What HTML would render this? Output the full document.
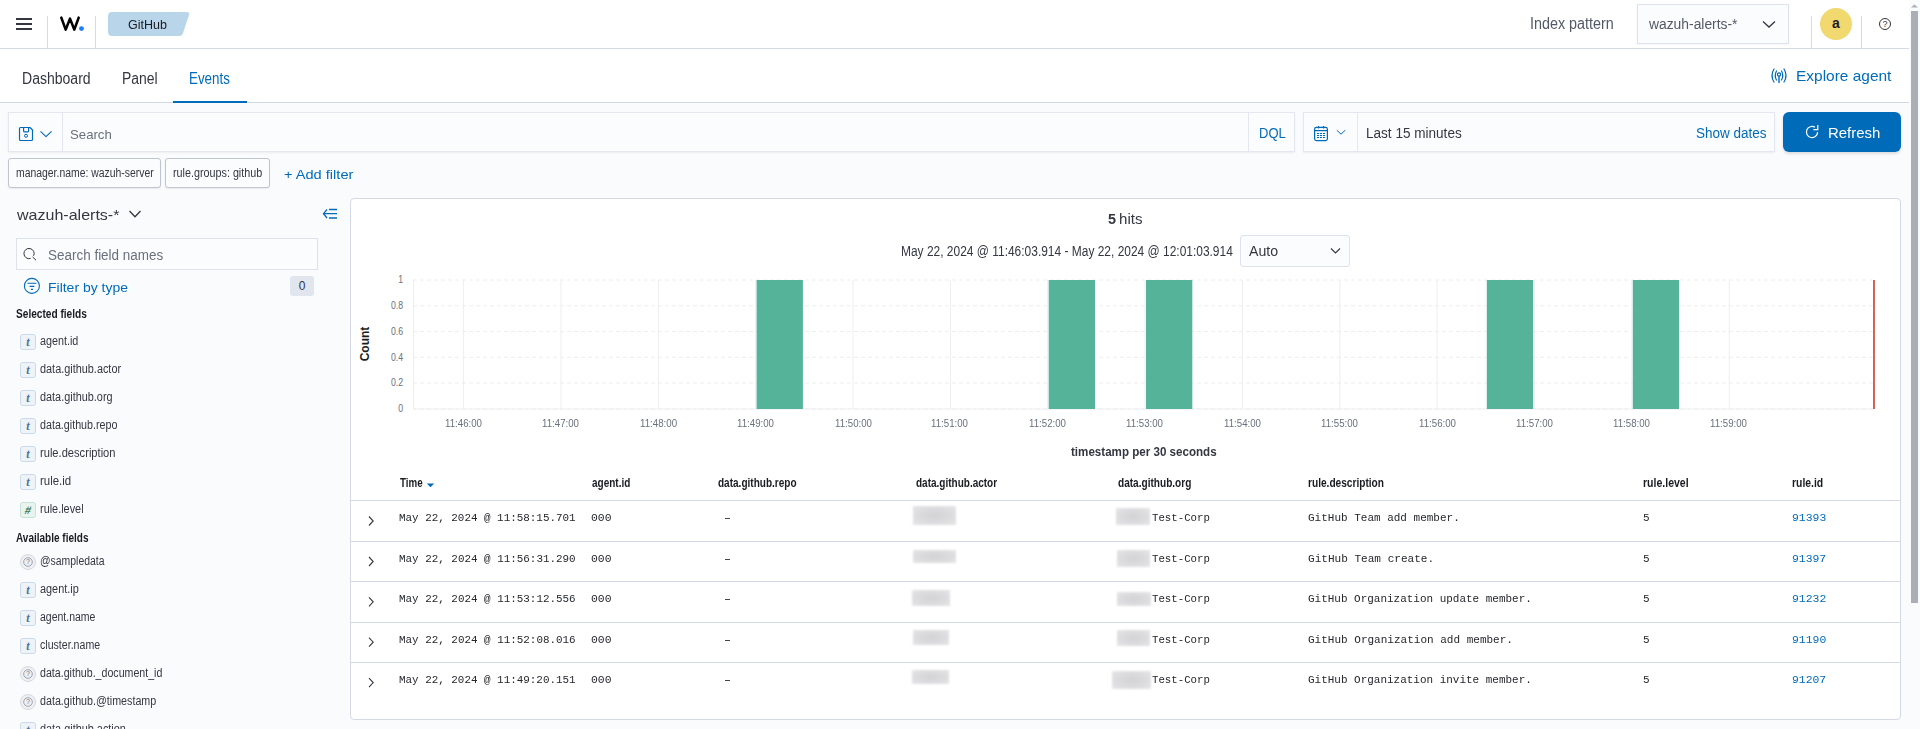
<!DOCTYPE html>
<html><head><meta charset="utf-8"><title>Wazuh - GitHub Events</title>
<style>
html,body{margin:0;padding:0;}
body{width:1920px;height:729px;overflow:hidden;background:#FAFBFD;font-family:'Liberation Sans', sans-serif;}
#root{position:relative;width:1920px;height:729px;overflow:hidden;background:#FAFBFD;}
.a{position:absolute;box-sizing:border-box;}
.t{position:absolute;white-space:nowrap;transform-origin:0 0;}
svg{position:absolute;overflow:visible;}
</style></head><body><div id="root">
<!-- header -->
<div class="a" style="left:0;top:0;width:1909px;height:49px;background:#fff;border-bottom:1px solid #D3DAE6;"></div>
<div class="a" style="left:16px;top:18px;width:16px;height:2px;background:#343741;"></div>
<div class="a" style="left:16px;top:23px;width:16px;height:2px;background:#343741;"></div>
<div class="a" style="left:16px;top:28px;width:16px;height:2px;background:#343741;"></div>
<div class="a" style="left:47px;top:16px;width:1px;height:32px;background:#D3DAE6;"></div>
<div class="a" style="left:95px;top:16px;width:1px;height:32px;background:#D3DAE6;"></div>
<svg style="left:0;top:0" width="100" height="48"><polyline points="61.3,17.6 65.7,29.6 70,18.6 74.3,29.6 78.7,17.6" fill="none" stroke="#000" stroke-width="2.6" stroke-linejoin="round" stroke-linecap="round"/><circle cx="81.5" cy="28.6" r="2.4" fill="#1B7BFF"/></svg>
<svg style="left:0;top:0" width="200" height="48"><path d="M112,12 L186,12 Q190,12 189,15 L183,33 Q182,36 179,36 L112,36 Q108,36 108,32 L108,16 Q108,12 112,12 Z" fill="#B9D5EA"/></svg>
<div class="a" style="left:1637px;top:4px;width:152px;height:40px;background:#FBFCFD;border:1px solid #DDE2EC;box-shadow:0 1px 2px rgba(0,0,0,0.04);"></div>
<svg style="left:0;top:0" width="1920" height="48"><polyline points="1763,21.5 1769,27 1775,21.5" fill="none" stroke="#343741" stroke-width="1.3"/></svg>
<div class="a" style="left:1811px;top:16px;width:1px;height:32px;background:#D3DAE6;"></div>
<div class="a" style="left:1861px;top:16px;width:1px;height:32px;background:#D3DAE6;"></div>
<div class="a" style="left:1820px;top:8px;width:32px;height:32px;border-radius:50%;background:#F1D86F;"></div>
<div class="a" style="left:1820px;top:8px;width:32px;height:32px;line-height:31px;text-align:center;font-size:14px;font-weight:700;color:#1a1c21;">a</div>
<div class="a" style="left:1879px;top:18px;width:12px;height:12px;border-radius:50%;border:1px solid #343741;"></div>
<div class="a" style="left:1879px;top:18px;width:12px;height:12px;line-height:12px;text-align:center;font-size:9px;color:#343741;">?</div>
<!-- tabs -->
<div class="a" style="left:0;top:49px;width:1909px;height:54px;background:#fff;border-bottom:1px solid #D3DAE6;"></div>
<div class="a" style="left:173px;top:101px;width:74px;height:2px;background:#006BB8;"></div>
<svg style="left:0;top:0" width="1920" height="100"><g fill="none" stroke="#006BB8" stroke-width="1.2" stroke-linecap="round"><path d="M1774,69 Q1770,75.5 1774,82"/><path d="M1776.5,71 Q1774,75.5 1776.5,80"/><path d="M1784,69 Q1788,75.5 1784,82"/><path d="M1781.5,71 Q1784,75.5 1781.5,80"/><circle cx="1779" cy="74.5" r="1.6"/><path d="M1779,76.5 L1779,82.5" stroke-width="1.4"/></g></svg>
<!-- query bar -->
<div class="a" style="left:8px;top:112px;width:1287px;height:40px;background:#FBFCFD;border:1px solid #E3E7EF;box-shadow:0 1px 2px rgba(0,0,0,0.06);"></div>
<div class="a" style="left:62px;top:113px;width:1px;height:38px;background:#E3E7EF;"></div>
<div class="a" style="left:1248px;top:113px;width:1px;height:38px;background:#E3E7EF;"></div>
<svg style="left:0;top:0" width="100" height="160"><g fill="none" stroke="#006BB8" stroke-width="1.2" stroke-linejoin="round"><path d="M20.5,127.5 L30,127.5 L32.5,130 L32.5,139.5 Q32.5,140.5 31.5,140.5 L20.5,140.5 Q19.5,140.5 19.5,139.5 L19.5,128.5 Q19.5,127.5 20.5,127.5 Z"/><path d="M23.6,127.5 L23.6,131 Q23.6,131.8 24.4,131.8 L27.8,131.8 Q28.6,131.8 28.6,131 L28.6,127.5"/><circle cx="26" cy="135.8" r="1.5" stroke-width="1"/><polyline points="40.5,131.3 46,136.6 51.5,131.3" stroke-width="1.1"/></g></svg>
<div class="a" style="left:1303px;top:112px;width:472px;height:40px;background:#FBFCFD;border:1px solid #E3E7EF;box-shadow:0 1px 2px rgba(0,0,0,0.06);"></div>
<div class="a" style="left:1357px;top:113px;width:1px;height:38px;background:#E3E7EF;"></div>
<svg style="left:0;top:0" width="1920" height="160"><g fill="none" stroke="#006BB8" stroke-width="1.2"><rect x="1314.6" y="127.4" width="12.8" height="13.2" rx="1.8"/><path d="M1314.6,130.6 L1327.4,130.6"/><path d="M1318.5,126 L1318.5,128.6 M1323.5,126 L1323.5,128.6"/></g><g fill="#006BB8"><rect x="1317" y="133" width="2" height="1"/><rect x="1320" y="133" width="2" height="1"/><rect x="1323" y="133" width="2" height="1"/><rect x="1317" y="135" width="2" height="1"/><rect x="1320" y="135" width="2" height="1"/><rect x="1323" y="135" width="2" height="1"/><rect x="1317" y="137" width="2" height="1"/><rect x="1320" y="137" width="2" height="1"/><rect x="1323" y="137" width="2" height="1"/></g><polyline points="1336.8,130.2 1341,134.2 1345.2,130.2" fill="none" stroke="#006BB8" stroke-width="1"/></svg>
<div class="a" style="left:1783px;top:112px;width:118px;height:40px;background:#006BB8;border-radius:6px;box-shadow:0 2px 3px rgba(0,0,0,0.12);"></div>
<svg style="left:0;top:0" width="1920" height="160"><g fill="none" stroke="#fff" stroke-width="1.2"><path d="M1815,127.3 A5.6,5.6 0 1 0 1817.6,132"/><polyline points="1817.8,125 1817.8,129.6 1813.4,129.6"/></g></svg>
<!-- filters -->
<div class="a" style="left:8px;top:158px;width:153px;height:30px;background:#FBFCFD;border:1px solid #BEC5D1;border-radius:3px;box-shadow:0 1px 2px rgba(0,0,0,0.07);"></div>
<div class="a" style="left:165px;top:158px;width:105px;height:30px;background:#FBFCFD;border:1px solid #BEC5D1;border-radius:3px;box-shadow:0 1px 2px rgba(0,0,0,0.07);"></div>
<!-- sidebar -->
<svg style="left:0;top:0" width="350" height="300"><polyline points="129.5,211 135,216.8 140.5,211" fill="none" stroke="#343741" stroke-width="1.3"/><g fill="none" stroke="#006BB8" stroke-width="1.3"><path d="M327,209.5 L323.5,213.7 L327,218"/><path d="M323.5,213.7 L337,213.7 M329,209.5 L337,209.5 M329,218 L337,218"/></g></svg>
<div class="a" style="left:16px;top:238px;width:302px;height:32px;background:#FBFCFD;border:1px solid #DDE2EC;"></div>
<svg style="left:0;top:0" width="350" height="300"><g fill="none" stroke="#343741" stroke-width="1"><path d="M33.6,255.8 A5.1,5.1 0 1 0 30.6,258.4"/><path d="M32.6,256.9 L36,260.2"/></g><g fill="none" stroke="#006BB8" stroke-width="1.1"><circle cx="31.9" cy="285.9" r="7.5"/><path d="M27.4,283.2 L36.4,283.2 M29.6,286.4 L34.4,286.4 M31,289.4 L33,289.4"/></g></svg>
<div class="a" style="left:290px;top:276px;width:24px;height:20px;background:#E0E5EE;border-radius:3px;"></div>
<div class="a" style="left:290px;top:276px;width:24px;height:20px;line-height:20px;text-align:center;font-size:12px;color:#343741;">0</div>

<div class="a" style="left:20px;top:334px;width:16px;height:16px;background:#EEF3F8;border:1px solid #C9DBEB;border-radius:3px;"></div>
<div class="a" style="left:20px;top:334px;width:16px;height:16px;line-height:16px;text-align:center;font-family:'Liberation Serif',serif;font-style:italic;font-weight:700;font-size:12px;color:#4C7298;">t</div>
<div class="a" style="left:20px;top:362px;width:16px;height:16px;background:#EEF3F8;border:1px solid #C9DBEB;border-radius:3px;"></div>
<div class="a" style="left:20px;top:362px;width:16px;height:16px;line-height:16px;text-align:center;font-family:'Liberation Serif',serif;font-style:italic;font-weight:700;font-size:12px;color:#4C7298;">t</div>
<div class="a" style="left:20px;top:390px;width:16px;height:16px;background:#EEF3F8;border:1px solid #C9DBEB;border-radius:3px;"></div>
<div class="a" style="left:20px;top:390px;width:16px;height:16px;line-height:16px;text-align:center;font-family:'Liberation Serif',serif;font-style:italic;font-weight:700;font-size:12px;color:#4C7298;">t</div>
<div class="a" style="left:20px;top:418px;width:16px;height:16px;background:#EEF3F8;border:1px solid #C9DBEB;border-radius:3px;"></div>
<div class="a" style="left:20px;top:418px;width:16px;height:16px;line-height:16px;text-align:center;font-family:'Liberation Serif',serif;font-style:italic;font-weight:700;font-size:12px;color:#4C7298;">t</div>
<div class="a" style="left:20px;top:446px;width:16px;height:16px;background:#EEF3F8;border:1px solid #C9DBEB;border-radius:3px;"></div>
<div class="a" style="left:20px;top:446px;width:16px;height:16px;line-height:16px;text-align:center;font-family:'Liberation Serif',serif;font-style:italic;font-weight:700;font-size:12px;color:#4C7298;">t</div>
<div class="a" style="left:20px;top:474px;width:16px;height:16px;background:#EEF3F8;border:1px solid #C9DBEB;border-radius:3px;"></div>
<div class="a" style="left:20px;top:474px;width:16px;height:16px;line-height:16px;text-align:center;font-family:'Liberation Serif',serif;font-style:italic;font-weight:700;font-size:12px;color:#4C7298;">t</div>
<div class="a" style="left:20px;top:502px;width:16px;height:16px;background:#E9F4EF;border:1px solid #C5E3D6;border-radius:3px;"></div>
<div class="a" style="left:20px;top:502px;width:16px;height:16px;line-height:16px;text-align:center;font-weight:700;font-size:11px;color:#3B7A62;transform:skewX(-14deg);">#</div>
<div class="a" style="left:20px;top:554px;width:16px;height:16px;background:#EEF0F3;border:1px solid #D5D9DF;border-radius:50%;"></div>
<svg style="left:0;top:0" width="40" height="729"><circle cx="28" cy="562" r="4.3" fill="none" stroke="#8A8F99" stroke-width="0.8"/><text x="28" y="564.3" font-size="6.5" text-anchor="middle" fill="#6A6F79" font-family="Liberation Sans">?</text></svg>
<div class="a" style="left:20px;top:582px;width:16px;height:16px;background:#EEF3F8;border:1px solid #C9DBEB;border-radius:3px;"></div>
<div class="a" style="left:20px;top:582px;width:16px;height:16px;line-height:16px;text-align:center;font-family:'Liberation Serif',serif;font-style:italic;font-weight:700;font-size:12px;color:#4C7298;">t</div>
<div class="a" style="left:20px;top:610px;width:16px;height:16px;background:#EEF3F8;border:1px solid #C9DBEB;border-radius:3px;"></div>
<div class="a" style="left:20px;top:610px;width:16px;height:16px;line-height:16px;text-align:center;font-family:'Liberation Serif',serif;font-style:italic;font-weight:700;font-size:12px;color:#4C7298;">t</div>
<div class="a" style="left:20px;top:638px;width:16px;height:16px;background:#EEF3F8;border:1px solid #C9DBEB;border-radius:3px;"></div>
<div class="a" style="left:20px;top:638px;width:16px;height:16px;line-height:16px;text-align:center;font-family:'Liberation Serif',serif;font-style:italic;font-weight:700;font-size:12px;color:#4C7298;">t</div>
<div class="a" style="left:20px;top:666px;width:16px;height:16px;background:#EEF0F3;border:1px solid #D5D9DF;border-radius:50%;"></div>
<svg style="left:0;top:0" width="40" height="729"><circle cx="28" cy="674" r="4.3" fill="none" stroke="#8A8F99" stroke-width="0.8"/><text x="28" y="676.3" font-size="6.5" text-anchor="middle" fill="#6A6F79" font-family="Liberation Sans">?</text></svg>
<div class="a" style="left:20px;top:694px;width:16px;height:16px;background:#EEF0F3;border:1px solid #D5D9DF;border-radius:50%;"></div>
<svg style="left:0;top:0" width="40" height="729"><circle cx="28" cy="702" r="4.3" fill="none" stroke="#8A8F99" stroke-width="0.8"/><text x="28" y="704.3" font-size="6.5" text-anchor="middle" fill="#6A6F79" font-family="Liberation Sans">?</text></svg>
<div class="a" style="left:20px;top:722px;width:16px;height:16px;background:#EEF3F8;border:1px solid #C9DBEB;border-radius:3px;"></div>
<div class="a" style="left:20px;top:722px;width:16px;height:16px;line-height:16px;text-align:center;font-family:'Liberation Serif',serif;font-style:italic;font-weight:700;font-size:12px;color:#4C7298;">t</div>
<div class="a" style="left:350px;top:198px;width:1551px;height:522px;background:#fff;border:1px solid #D3DAE6;border-radius:4px;"></div>
<div class="a" style="left:1240px;top:235px;width:110px;height:32px;background:#FBFCFD;border:1px solid #DDE2EC;border-radius:3px;"></div>
<svg style="left:0;top:0" width="1920" height="300"><polyline points="1331,248.5 1335.5,253 1340,248.5" fill="none" stroke="#343741" stroke-width="1.1"/></svg>
<svg style="left:0;top:0" width="1920" height="729">
<line x1="413" y1="280.0" x2="1875" y2="280.0" stroke="#EDEEF1" stroke-width="1" stroke-dasharray="4,3"/>
<line x1="413" y1="305.8" x2="1875" y2="305.8" stroke="#EDEEF1" stroke-width="1" stroke-dasharray="4,3"/>
<line x1="413" y1="331.5" x2="1875" y2="331.5" stroke="#EDEEF1" stroke-width="1" stroke-dasharray="4,3"/>
<line x1="413" y1="357.3" x2="1875" y2="357.3" stroke="#EDEEF1" stroke-width="1" stroke-dasharray="4,3"/>
<line x1="413" y1="383.0" x2="1875" y2="383.0" stroke="#EDEEF1" stroke-width="1" stroke-dasharray="4,3"/>
<line x1="413" y1="408.8" x2="1875" y2="408.8" stroke="#EDEEF1" stroke-width="1" stroke-dasharray="4,3"/>
<line x1="463.6" y1="280" x2="463.6" y2="409" stroke="#EDEEF1" stroke-width="1"/>
<line x1="561.0" y1="280" x2="561.0" y2="409" stroke="#EDEEF1" stroke-width="1"/>
<line x1="658.3" y1="280" x2="658.3" y2="409" stroke="#EDEEF1" stroke-width="1"/>
<line x1="755.6" y1="280" x2="755.6" y2="409" stroke="#EDEEF1" stroke-width="1"/>
<line x1="853.0" y1="280" x2="853.0" y2="409" stroke="#EDEEF1" stroke-width="1"/>
<line x1="950.4" y1="280" x2="950.4" y2="409" stroke="#EDEEF1" stroke-width="1"/>
<line x1="1047.7" y1="280" x2="1047.7" y2="409" stroke="#EDEEF1" stroke-width="1"/>
<line x1="1145.0" y1="280" x2="1145.0" y2="409" stroke="#EDEEF1" stroke-width="1"/>
<line x1="1242.4" y1="280" x2="1242.4" y2="409" stroke="#EDEEF1" stroke-width="1"/>
<line x1="1339.8" y1="280" x2="1339.8" y2="409" stroke="#EDEEF1" stroke-width="1"/>
<line x1="1437.1" y1="280" x2="1437.1" y2="409" stroke="#EDEEF1" stroke-width="1"/>
<line x1="1534.4" y1="280" x2="1534.4" y2="409" stroke="#EDEEF1" stroke-width="1"/>
<line x1="1631.8" y1="280" x2="1631.8" y2="409" stroke="#EDEEF1" stroke-width="1"/>
<line x1="1729.2" y1="280" x2="1729.2" y2="409" stroke="#EDEEF1" stroke-width="1"/>
<line x1="413.5" y1="280" x2="413.5" y2="409" stroke="#EDEEF1" stroke-width="1"/>
<line x1="413" y1="409" x2="1875" y2="409" stroke="#EDEEF1" stroke-width="1"/>
<rect x="756.6" y="280" width="46.3" height="129" fill="#54B399"/>
<rect x="1048.7" y="280" width="46.3" height="129" fill="#54B399"/>
<rect x="1146.0" y="280" width="46.3" height="129" fill="#54B399"/>
<rect x="1486.8" y="280" width="46.3" height="129" fill="#54B399"/>
<rect x="1632.8" y="280" width="46.3" height="129" fill="#54B399"/>
<rect x="1873" y="280" width="2" height="129" fill="#D6625C"/>
<text transform="translate(403,283.4) scale(0.87,1)" font-size="10" text-anchor="end" fill="#69707D" font-family="Liberation Sans">1</text>
<text transform="translate(403,309.2) scale(0.87,1)" font-size="10" text-anchor="end" fill="#69707D" font-family="Liberation Sans">0.8</text>
<text transform="translate(403,334.9) scale(0.87,1)" font-size="10" text-anchor="end" fill="#69707D" font-family="Liberation Sans">0.6</text>
<text transform="translate(403,360.7) scale(0.87,1)" font-size="10" text-anchor="end" fill="#69707D" font-family="Liberation Sans">0.4</text>
<text transform="translate(403,386.4) scale(0.87,1)" font-size="10" text-anchor="end" fill="#69707D" font-family="Liberation Sans">0.2</text>
<text transform="translate(403,412.2) scale(0.87,1)" font-size="10" text-anchor="end" fill="#69707D" font-family="Liberation Sans">0</text>
<text transform="translate(368.5,344) rotate(-90)" font-size="12" font-weight="700" text-anchor="middle" fill="#1a1c21" font-family="Liberation Sans">Count</text>
<polygon points="426.8,483.5 434.2,483.5 430.5,487.3" fill="#006BB8"/>
<polyline points="369,516.5 373.2,521.0 369,525.5" fill="none" stroke="#343741" stroke-width="1.1"/>
<polyline points="369,557.0 373.2,561.5 369,566.0" fill="none" stroke="#343741" stroke-width="1.1"/>
<polyline points="369,597.3 373.2,601.8 369,606.3" fill="none" stroke="#343741" stroke-width="1.1"/>
<polyline points="369,637.7 373.2,642.2 369,646.7" fill="none" stroke="#343741" stroke-width="1.1"/>
<polyline points="369,678.1 373.2,682.6 369,687.1" fill="none" stroke="#343741" stroke-width="1.1"/>
</svg>
<div class="a" style="left:351px;top:500px;width:1549px;height:1px;background:#D3DAE6;"></div>
<div class="a" style="left:351px;top:541px;width:1549px;height:1px;background:#D3DAE6;"></div>
<div class="a" style="left:351px;top:581px;width:1549px;height:1px;background:#D3DAE6;"></div>
<div class="a" style="left:351px;top:622px;width:1549px;height:1px;background:#D3DAE6;"></div>
<div class="a" style="left:351px;top:662px;width:1549px;height:1px;background:#D3DAE6;"></div>
<div class="a" style="left:913px;top:506px;width:43px;height:19px;background:radial-gradient(ellipse at center,#D3D3D5 0%,#DCDCDE 55%,#E6E6E8 100%);filter:blur(1px);"></div>
<div class="a" style="left:913px;top:550px;width:43px;height:13px;background:radial-gradient(ellipse at center,#D3D3D5 0%,#DCDCDE 55%,#E6E6E8 100%);filter:blur(1px);"></div>
<div class="a" style="left:912px;top:590px;width:38px;height:16px;background:radial-gradient(ellipse at center,#D3D3D5 0%,#DCDCDE 55%,#E6E6E8 100%);filter:blur(1px);"></div>
<div class="a" style="left:913px;top:630px;width:36px;height:15px;background:radial-gradient(ellipse at center,#D3D3D5 0%,#DCDCDE 55%,#E6E6E8 100%);filter:blur(1px);"></div>
<div class="a" style="left:912px;top:670px;width:37px;height:14px;background:radial-gradient(ellipse at center,#D3D3D5 0%,#DCDCDE 55%,#E6E6E8 100%);filter:blur(1px);"></div>
<div class="a" style="left:1116px;top:508px;width:34px;height:17px;background:radial-gradient(ellipse at center,#D3D3D5 0%,#DCDCDE 55%,#E6E6E8 100%);filter:blur(1px);"></div>
<div class="a" style="left:1117px;top:550px;width:33px;height:17px;background:radial-gradient(ellipse at center,#D3D3D5 0%,#DCDCDE 55%,#E6E6E8 100%);filter:blur(1px);"></div>
<div class="a" style="left:1117px;top:592px;width:34px;height:14px;background:radial-gradient(ellipse at center,#D3D3D5 0%,#DCDCDE 55%,#E6E6E8 100%);filter:blur(1px);"></div>
<div class="a" style="left:1117px;top:630px;width:33px;height:16px;background:radial-gradient(ellipse at center,#D3D3D5 0%,#DCDCDE 55%,#E6E6E8 100%);filter:blur(1px);"></div>
<div class="a" style="left:1112px;top:671px;width:39px;height:18px;background:radial-gradient(ellipse at center,#D3D3D5 0%,#DCDCDE 55%,#E6E6E8 100%);filter:blur(1px);"></div>
<div class="a" style="left:1911px;top:11px;width:7px;height:592px;background:#A9AEB7;"></div>
<svg style="left:0;top:0" width="1920" height="20"><polygon points="1911,7.5 1918,7.5 1914.5,4.5" fill="#A9AEB7"/></svg>

<span class="t" id="t0" style="left:127.57px;top:17.70px;font-size:13px;line-height:13px;color:#1a1c21;font-family:'Liberation Sans', sans-serif;transform:scaleX(0.9625);">GitHub</span>
<span class="t" id="t1" style="left:1530.10px;top:16.26px;font-size:16px;line-height:16px;color:#535966;font-family:'Liberation Sans', sans-serif;transform:scaleX(0.8971);">Index pattern</span>
<span class="t" id="t2" style="left:1649.00px;top:17.05px;font-size:14px;line-height:14px;color:#535966;font-family:'Liberation Sans', sans-serif;transform:scaleX(0.9888);">wazuh-alerts-*</span>
<span class="t" id="t3" style="left:21.66px;top:70.56px;font-size:16px;line-height:16px;color:#343741;font-family:'Liberation Sans', sans-serif;transform:scaleX(0.8766);">Dashboard</span>
<span class="t" id="t4" style="left:121.64px;top:70.56px;font-size:16px;line-height:16px;color:#343741;font-family:'Liberation Sans', sans-serif;transform:scaleX(0.8718);">Panel</span>
<span class="t" id="t5" style="left:189.10px;top:70.56px;font-size:16px;line-height:16px;color:#006BB8;font-family:'Liberation Sans', sans-serif;transform:scaleX(0.8344);">Events</span>
<span class="t" id="t6" style="left:1795.57px;top:68.10px;font-size:15px;line-height:15px;color:#006BB8;font-family:'Liberation Sans', sans-serif;transform:scaleX(1.0305);">Explore agent</span>
<span class="t" id="t7" style="left:69.58px;top:127.80px;font-size:13px;line-height:13px;color:#69707D;font-family:'Liberation Sans', sans-serif;transform:scaleX(1.0145);">Search</span>
<span class="t" id="t8" style="left:1259.10px;top:126.25px;font-size:14px;line-height:14px;color:#006BB8;font-family:'Liberation Sans', sans-serif;transform:scaleX(0.9286);">DQL</span>
<span class="t" id="t9" style="left:1365.65px;top:125.55px;font-size:14px;line-height:14px;color:#343741;font-family:'Liberation Sans', sans-serif;transform:scaleX(0.9682);">Last 15 minutes</span>
<span class="t" id="t10" style="left:1695.58px;top:125.55px;font-size:14px;line-height:14px;color:#006BB8;font-family:'Liberation Sans', sans-serif;transform:scaleX(0.9641);">Show dates</span>
<span class="t" id="t11" style="left:1828.10px;top:125.30px;font-size:15px;line-height:15px;color:#FFFFFF;font-family:'Liberation Sans', sans-serif;font-weight:500;transform:scaleX(0.9957);">Refresh</span>
<span class="t" id="t12" style="left:15.66px;top:166.84px;font-size:12px;line-height:12px;color:#343741;font-family:'Liberation Sans', sans-serif;transform:scaleX(0.8675);">manager.name: wazuh-server</span>
<span class="t" id="t13" style="left:172.66px;top:166.84px;font-size:12px;line-height:12px;color:#343741;font-family:'Liberation Sans', sans-serif;transform:scaleX(0.8977);">rule.groups: github</span>
<span class="t" id="t14" style="left:283.64px;top:167.90px;font-size:13px;line-height:13px;color:#006BB8;font-family:'Liberation Sans', sans-serif;transform:scaleX(1.1224);">+ Add filter</span>
<span class="t" id="t15" style="left:17.47px;top:206.70px;font-size:15px;line-height:15px;color:#343741;font-family:'Liberation Sans', sans-serif;transform:scaleX(1.0686);">wazuh-alerts-*</span>
<span class="t" id="t16" style="left:47.58px;top:247.95px;font-size:14px;line-height:14px;color:#69707D;font-family:'Liberation Sans', sans-serif;transform:scaleX(0.9614);">Search field names</span>
<span class="t" id="t17" style="left:47.65px;top:280.80px;font-size:13px;line-height:13px;color:#006BB8;font-family:'Liberation Sans', sans-serif;transform:scaleX(1.0742);">Filter by type</span>
<span class="t" id="t18" style="left:15.57px;top:307.84px;font-size:12px;line-height:12px;color:#1a1c21;font-family:'Liberation Sans', sans-serif;font-weight:700;transform:scaleX(0.8434);">Selected fields</span>
<span class="t" id="t19" style="left:40.46px;top:334.84px;font-size:12px;line-height:12px;color:#343741;font-family:'Liberation Sans', sans-serif;transform:scaleX(0.8982);">agent.id</span>
<span class="t" id="t20" style="left:40.46px;top:362.84px;font-size:12px;line-height:12px;color:#343741;font-family:'Liberation Sans', sans-serif;transform:scaleX(0.9069);">data.github.actor</span>
<span class="t" id="t21" style="left:40.46px;top:390.84px;font-size:12px;line-height:12px;color:#343741;font-family:'Liberation Sans', sans-serif;transform:scaleX(0.9065);">data.github.org</span>
<span class="t" id="t22" style="left:40.46px;top:418.84px;font-size:12px;line-height:12px;color:#343741;font-family:'Liberation Sans', sans-serif;transform:scaleX(0.8933);">data.github.repo</span>
<span class="t" id="t23" style="left:39.66px;top:446.84px;font-size:12px;line-height:12px;color:#343741;font-family:'Liberation Sans', sans-serif;transform:scaleX(0.9279);">rule.description</span>
<span class="t" id="t24" style="left:39.66px;top:474.84px;font-size:12px;line-height:12px;color:#343741;font-family:'Liberation Sans', sans-serif;transform:scaleX(0.9529);">rule.id</span>
<span class="t" id="t25" style="left:39.66px;top:502.84px;font-size:12px;line-height:12px;color:#343741;font-family:'Liberation Sans', sans-serif;transform:scaleX(0.9073);">rule.level</span>
<span class="t" id="t26" style="left:16.46px;top:531.64px;font-size:12px;line-height:12px;color:#1a1c21;font-family:'Liberation Sans', sans-serif;font-weight:700;transform:scaleX(0.8339);">Available fields</span>
<span class="t" id="t27" style="left:39.66px;top:555.24px;font-size:12px;line-height:12px;color:#343741;font-family:'Liberation Sans', sans-serif;transform:scaleX(0.8691);">@sampledata</span>
<span class="t" id="t28" style="left:40.46px;top:583.24px;font-size:12px;line-height:12px;color:#343741;font-family:'Liberation Sans', sans-serif;transform:scaleX(0.9082);">agent.ip</span>
<span class="t" id="t29" style="left:40.46px;top:611.24px;font-size:12px;line-height:12px;color:#343741;font-family:'Liberation Sans', sans-serif;transform:scaleX(0.8750);">agent.name</span>
<span class="t" id="t30" style="left:40.46px;top:639.24px;font-size:12px;line-height:12px;color:#343741;font-family:'Liberation Sans', sans-serif;transform:scaleX(0.8841);">cluster.name</span>
<span class="t" id="t31" style="left:40.46px;top:667.24px;font-size:12px;line-height:12px;color:#343741;font-family:'Liberation Sans', sans-serif;transform:scaleX(0.8862);">data.github._document_id</span>
<span class="t" id="t32" style="left:40.46px;top:695.24px;font-size:12px;line-height:12px;color:#343741;font-family:'Liberation Sans', sans-serif;transform:scaleX(0.8924);">data.github.@timestamp</span>
<span class="t" id="t33" style="left:40.46px;top:723.24px;font-size:12px;line-height:12px;color:#343741;font-family:'Liberation Sans', sans-serif;transform:scaleX(0.9066);">data.github.action</span>
<span class="t" id="t34" style="left:1119.41px;top:211.00px;font-size:15px;line-height:15px;color:#343741;font-family:'Liberation Sans', sans-serif;transform:scaleX(1.0053);">hits</span>
<span class="t" id="t35" style="left:1107.64px;top:211.00px;font-size:15px;line-height:15px;color:#343741;font-family:'Liberation Sans', sans-serif;font-weight:700;transform:scaleX(0.9571);">5</span>
<span class="t" id="t36" style="left:900.65px;top:244.45px;font-size:14px;line-height:14px;color:#343741;font-family:'Liberation Sans', sans-serif;transform:scaleX(0.8540);">May 22, 2024 @ 11:46:03.914 - May 22, 2024 @ 12:01:03.914</span>
<span class="t" id="t37" style="left:1248.54px;top:243.65px;font-size:14px;line-height:14px;color:#343741;font-family:'Liberation Sans', sans-serif;transform:scaleX(1.0108);">Auto</span>
<span class="t" id="t38" style="left:444.61px;top:418.54px;font-size:10px;line-height:10px;color:#69707D;font-family:'Liberation Sans', sans-serif;transform:scaleX(0.9691);">11:46:00</span>
<span class="t" id="t39" style="left:542.38px;top:418.54px;font-size:10px;line-height:10px;color:#69707D;font-family:'Liberation Sans', sans-serif;transform:scaleX(0.9691);">11:47:00</span>
<span class="t" id="t40" style="left:639.64px;top:418.54px;font-size:10px;line-height:10px;color:#69707D;font-family:'Liberation Sans', sans-serif;transform:scaleX(0.9713);">11:48:00</span>
<span class="t" id="t41" style="left:736.90px;top:418.54px;font-size:10px;line-height:10px;color:#69707D;font-family:'Liberation Sans', sans-serif;transform:scaleX(0.9691);">11:49:00</span>
<span class="t" id="t42" style="left:834.57px;top:418.54px;font-size:10px;line-height:10px;color:#69707D;font-family:'Liberation Sans', sans-serif;transform:scaleX(0.9691);">11:50:00</span>
<span class="t" id="t43" style="left:931.33px;top:418.54px;font-size:10px;line-height:10px;color:#69707D;font-family:'Liberation Sans', sans-serif;transform:scaleX(0.9691);">11:51:00</span>
<span class="t" id="t44" style="left:1029.10px;top:418.54px;font-size:10px;line-height:10px;color:#69707D;font-family:'Liberation Sans', sans-serif;transform:scaleX(0.9691);">11:52:00</span>
<span class="t" id="t45" style="left:1126.36px;top:418.54px;font-size:10px;line-height:10px;color:#69707D;font-family:'Liberation Sans', sans-serif;transform:scaleX(0.9691);">11:53:00</span>
<span class="t" id="t46" style="left:1223.63px;top:418.54px;font-size:10px;line-height:10px;color:#69707D;font-family:'Liberation Sans', sans-serif;transform:scaleX(0.9691);">11:54:00</span>
<span class="t" id="t47" style="left:1320.89px;top:418.54px;font-size:10px;line-height:10px;color:#69707D;font-family:'Liberation Sans', sans-serif;transform:scaleX(0.9691);">11:55:00</span>
<span class="t" id="t48" style="left:1418.66px;top:418.54px;font-size:10px;line-height:10px;color:#69707D;font-family:'Liberation Sans', sans-serif;transform:scaleX(0.9691);">11:56:00</span>
<span class="t" id="t49" style="left:1515.82px;top:418.54px;font-size:10px;line-height:10px;color:#69707D;font-family:'Liberation Sans', sans-serif;transform:scaleX(0.9691);">11:57:00</span>
<span class="t" id="t50" style="left:1613.09px;top:418.54px;font-size:10px;line-height:10px;color:#69707D;font-family:'Liberation Sans', sans-serif;transform:scaleX(0.9691);">11:58:00</span>
<span class="t" id="t51" style="left:1710.36px;top:418.54px;font-size:10px;line-height:10px;color:#69707D;font-family:'Liberation Sans', sans-serif;transform:scaleX(0.9691);">11:59:00</span>
<span class="t" id="t52" style="left:1070.54px;top:445.84px;font-size:12px;line-height:12px;color:#343741;font-family:'Liberation Sans', sans-serif;font-weight:700;transform:scaleX(0.9661);">timestamp per 30 seconds</span>
<span class="t" id="t53" style="left:399.51px;top:476.84px;font-size:12px;line-height:12px;color:#1a1c21;font-family:'Liberation Sans', sans-serif;font-weight:700;transform:scaleX(0.8140);">Time</span>
<span class="t" id="t54" style="left:591.54px;top:476.84px;font-size:12px;line-height:12px;color:#1a1c21;font-family:'Liberation Sans', sans-serif;font-weight:700;transform:scaleX(0.8322);">agent.id</span>
<span class="t" id="t55" style="left:717.52px;top:476.84px;font-size:12px;line-height:12px;color:#1a1c21;font-family:'Liberation Sans', sans-serif;font-weight:700;transform:scaleX(0.8354);">data.github.repo</span>
<span class="t" id="t56" style="left:916.47px;top:476.84px;font-size:12px;line-height:12px;color:#1a1c21;font-family:'Liberation Sans', sans-serif;font-weight:700;transform:scaleX(0.8333);">data.github.actor</span>
<span class="t" id="t57" style="left:1118.46px;top:476.84px;font-size:12px;line-height:12px;color:#1a1c21;font-family:'Liberation Sans', sans-serif;font-weight:700;transform:scaleX(0.8398);">data.github.org</span>
<span class="t" id="t58" style="left:1308.10px;top:476.84px;font-size:12px;line-height:12px;color:#1a1c21;font-family:'Liberation Sans', sans-serif;font-weight:700;transform:scaleX(0.8441);">rule.description</span>
<span class="t" id="t59" style="left:1642.65px;top:476.84px;font-size:12px;line-height:12px;color:#1a1c21;font-family:'Liberation Sans', sans-serif;font-weight:700;transform:scaleX(0.8772);">rule.level</span>
<span class="t" id="t60" style="left:1792.10px;top:476.84px;font-size:12px;line-height:12px;color:#1a1c21;font-family:'Liberation Sans', sans-serif;font-weight:700;transform:scaleX(0.8664);">rule.id</span>
<span class="t" id="t61" style="left:398.65px;top:512.19px;font-size:11.5px;line-height:11.5px;color:#25272d;font-family:'Liberation Mono', monospace;transform:scaleX(0.9479);">May 22, 2024 @ 11:58:15.701</span>
<span class="t" id="t62" style="left:590.50px;top:512.19px;font-size:11.5px;line-height:11.5px;color:#25272d;font-family:'Liberation Mono', monospace;transform:scaleX(0.9923);">000</span>
<span class="t" id="t63" style="left:722.35px;top:512.19px;font-size:11.5px;line-height:11.5px;color:#25272d;font-family:'Liberation Mono', monospace;transform:scaleX(1.5961);">-</span>
<span class="t" id="t64" style="left:1151.55px;top:512.19px;font-size:11.5px;line-height:11.5px;color:#25272d;font-family:'Liberation Mono', monospace;transform:scaleX(0.9315);">Test-Corp</span>
<span class="t" id="t65" style="left:1308.10px;top:512.19px;font-size:11.5px;line-height:11.5px;color:#25272d;font-family:'Liberation Mono', monospace;transform:scaleX(0.9561);">GitHub Team add member.</span>
<span class="t" id="t66" style="left:1642.65px;top:512.19px;font-size:11.5px;line-height:11.5px;color:#25272d;font-family:'Liberation Mono', monospace;transform:scaleX(0.9555);">5</span>
<span class="t" id="t67" style="left:1792.10px;top:512.19px;font-size:11.5px;line-height:11.5px;color:#006BB8;font-family:'Liberation Mono', monospace;transform:scaleX(0.9926);">91393</span>
<span class="t" id="t68" style="left:398.65px;top:552.69px;font-size:11.5px;line-height:11.5px;color:#25272d;font-family:'Liberation Mono', monospace;transform:scaleX(0.9480);">May 22, 2024 @ 11:56:31.290</span>
<span class="t" id="t69" style="left:590.50px;top:552.69px;font-size:11.5px;line-height:11.5px;color:#25272d;font-family:'Liberation Mono', monospace;transform:scaleX(0.9923);">000</span>
<span class="t" id="t70" style="left:722.35px;top:552.69px;font-size:11.5px;line-height:11.5px;color:#25272d;font-family:'Liberation Mono', monospace;transform:scaleX(1.5961);">-</span>
<span class="t" id="t71" style="left:1151.55px;top:552.69px;font-size:11.5px;line-height:11.5px;color:#25272d;font-family:'Liberation Mono', monospace;transform:scaleX(0.9315);">Test-Corp</span>
<span class="t" id="t72" style="left:1308.10px;top:552.69px;font-size:11.5px;line-height:11.5px;color:#25272d;font-family:'Liberation Mono', monospace;transform:scaleX(0.9617);">GitHub Team create.</span>
<span class="t" id="t73" style="left:1642.65px;top:552.69px;font-size:11.5px;line-height:11.5px;color:#25272d;font-family:'Liberation Mono', monospace;transform:scaleX(0.9555);">5</span>
<span class="t" id="t74" style="left:1792.10px;top:552.69px;font-size:11.5px;line-height:11.5px;color:#006BB8;font-family:'Liberation Mono', monospace;transform:scaleX(0.9899);">91397</span>
<span class="t" id="t75" style="left:398.65px;top:592.89px;font-size:11.5px;line-height:11.5px;color:#25272d;font-family:'Liberation Mono', monospace;transform:scaleX(0.9480);">May 22, 2024 @ 11:53:12.556</span>
<span class="t" id="t76" style="left:590.50px;top:592.89px;font-size:11.5px;line-height:11.5px;color:#25272d;font-family:'Liberation Mono', monospace;transform:scaleX(0.9923);">000</span>
<span class="t" id="t77" style="left:722.35px;top:592.89px;font-size:11.5px;line-height:11.5px;color:#25272d;font-family:'Liberation Mono', monospace;transform:scaleX(1.5961);">-</span>
<span class="t" id="t78" style="left:1151.55px;top:592.89px;font-size:11.5px;line-height:11.5px;color:#25272d;font-family:'Liberation Mono', monospace;transform:scaleX(0.9315);">Test-Corp</span>
<span class="t" id="t79" style="left:1308.10px;top:592.89px;font-size:11.5px;line-height:11.5px;color:#25272d;font-family:'Liberation Mono', monospace;transform:scaleX(0.9540);">GitHub Organization update member.</span>
<span class="t" id="t80" style="left:1642.65px;top:592.89px;font-size:11.5px;line-height:11.5px;color:#25272d;font-family:'Liberation Mono', monospace;transform:scaleX(0.9555);">5</span>
<span class="t" id="t81" style="left:1792.10px;top:592.89px;font-size:11.5px;line-height:11.5px;color:#006BB8;font-family:'Liberation Mono', monospace;transform:scaleX(0.9926);">91232</span>
<span class="t" id="t82" style="left:398.65px;top:634.29px;font-size:11.5px;line-height:11.5px;color:#25272d;font-family:'Liberation Mono', monospace;transform:scaleX(0.9480);">May 22, 2024 @ 11:52:08.016</span>
<span class="t" id="t83" style="left:590.50px;top:634.29px;font-size:11.5px;line-height:11.5px;color:#25272d;font-family:'Liberation Mono', monospace;transform:scaleX(0.9923);">000</span>
<span class="t" id="t84" style="left:722.35px;top:634.29px;font-size:11.5px;line-height:11.5px;color:#25272d;font-family:'Liberation Mono', monospace;transform:scaleX(1.5961);">-</span>
<span class="t" id="t85" style="left:1151.55px;top:634.29px;font-size:11.5px;line-height:11.5px;color:#25272d;font-family:'Liberation Mono', monospace;transform:scaleX(0.9315);">Test-Corp</span>
<span class="t" id="t86" style="left:1308.10px;top:634.29px;font-size:11.5px;line-height:11.5px;color:#25272d;font-family:'Liberation Mono', monospace;transform:scaleX(0.9579);">GitHub Organization add member.</span>
<span class="t" id="t87" style="left:1642.65px;top:634.29px;font-size:11.5px;line-height:11.5px;color:#25272d;font-family:'Liberation Mono', monospace;transform:scaleX(0.9555);">5</span>
<span class="t" id="t88" style="left:1792.10px;top:634.29px;font-size:11.5px;line-height:11.5px;color:#006BB8;font-family:'Liberation Mono', monospace;transform:scaleX(0.9926);">91190</span>
<span class="t" id="t89" style="left:398.65px;top:673.99px;font-size:11.5px;line-height:11.5px;color:#25272d;font-family:'Liberation Mono', monospace;transform:scaleX(0.9479);">May 22, 2024 @ 11:49:20.151</span>
<span class="t" id="t90" style="left:590.50px;top:673.99px;font-size:11.5px;line-height:11.5px;color:#25272d;font-family:'Liberation Mono', monospace;transform:scaleX(0.9923);">000</span>
<span class="t" id="t91" style="left:722.35px;top:673.99px;font-size:11.5px;line-height:11.5px;color:#25272d;font-family:'Liberation Mono', monospace;transform:scaleX(1.5961);">-</span>
<span class="t" id="t92" style="left:1151.55px;top:673.99px;font-size:11.5px;line-height:11.5px;color:#25272d;font-family:'Liberation Mono', monospace;transform:scaleX(0.9315);">Test-Corp</span>
<span class="t" id="t93" style="left:1308.10px;top:673.99px;font-size:11.5px;line-height:11.5px;color:#25272d;font-family:'Liberation Mono', monospace;transform:scaleX(0.9540);">GitHub Organization invite member.</span>
<span class="t" id="t94" style="left:1642.65px;top:673.99px;font-size:11.5px;line-height:11.5px;color:#25272d;font-family:'Liberation Mono', monospace;transform:scaleX(0.9555);">5</span>
<span class="t" id="t95" style="left:1792.10px;top:673.99px;font-size:11.5px;line-height:11.5px;color:#006BB8;font-family:'Liberation Mono', monospace;transform:scaleX(0.9899);">91207</span>
</div></body></html>
